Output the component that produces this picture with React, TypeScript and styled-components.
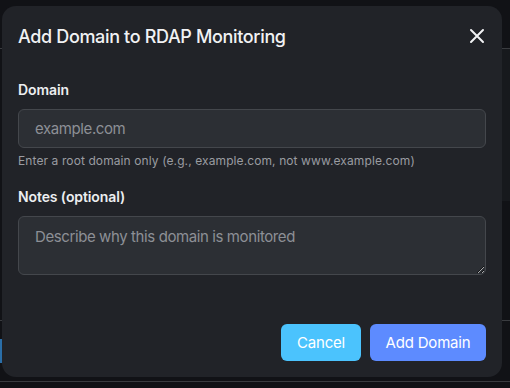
import React from "react";
import styled, { createGlobalStyle } from "styled-components";

const GlobalStyle = createGlobalStyle`
  html, body {
    margin: 0;
    padding: 0;
    background: #111216;
    font-family: Inter, "Noto Sans", sans-serif;
  }
  * { box-sizing: border-box; }
`;

const Backdrop = styled.div`
  position: relative;
  width: 510px;
  height: 388px;
  overflow: hidden;
  background: #111216;
`;

const Rule = styled.div<{ $top: number }>`
  position: absolute;
  left: 0;
  right: 0;
  top: ${({ $top }) => $top}px;
  height: 1px;
  background: #3a3c40;
`;

const SidePanel = styled.div`
  position: absolute;
  right: 0;
  top: 49px;
  width: 8px;
  height: 152px;
  background: #17191d;
`;

const BlueChip = styled.div`
  position: absolute;
  left: 0;
  top: 339px;
  width: 3px;
  height: 24px;
  background: #2a6ea8;
`;

const Modal = styled.div`
  position: absolute;
  left: 2px;
  top: 6px;
  width: 500px;
  height: 371px;
  background: #212328;
  border-radius: 14px;
  padding: 18px 16px 16px 16px;
  display: flex;
  flex-direction: column;
`;

const Header = styled.div`
  display: flex;
  align-items: center;
  justify-content: space-between;
  height: 24px;
`;

const Title = styled.h2`
  margin: 0;
  font-size: 18px;
  font-weight: 500;
  color: #f1f2f4;
  letter-spacing: -0.35px;
`;

const CloseButton = styled.button`
  background: none;
  border: none;
  padding: 0;
  width: 18px;
  height: 18px;
  cursor: pointer;
  display: flex;
`;

const Body = styled.div`
  display: flex;
  flex-direction: column;
  margin-top: 33px;
`;

const Label = styled.label`
  font-size: 14px;
  font-weight: 600;
  color: #eceef0;
  line-height: 18px;
  letter-spacing: -0.1px;
`;

const Field = styled.input`
  margin-top: 10px;
  height: 39px;
  width: 100%;
  background: #2c2f34;
  border: 1px solid #44474c;
  border-radius: 6px;
  padding: 0 16px;
  font-family: inherit;
  font-size: 15px;
  letter-spacing: -0.4px;
  color: #e6e7e9;
  outline: none;
  &::placeholder { color: #8d9096; }
`;

const Help = styled.div`
  margin-top: 5px;
  font-size: 12px;
  color: #9a9ca1;
  line-height: 16px;
  letter-spacing: 0.1px;
`;

const Area = styled.textarea`
  margin-top: 10px;
  height: 59px;
  width: 100%;
  background: #2c2f34;
  border: 1px solid #44474c;
  border-radius: 6px;
  padding: 10px 16px;
  font-family: inherit;
  font-size: 15px;
  letter-spacing: -0.4px;
  color: #e6e7e9;
  outline: none;
  resize: vertical;
  &::placeholder { color: #8d9096; }
`;

const Section = styled.div<{ $gap?: number }>`
  display: flex;
  flex-direction: column;
  margin-top: ${({ $gap }) => $gap ?? 0}px;
`;

const Footer = styled.div`
  margin-top: auto;
  display: flex;
  justify-content: flex-end;
  gap: 9px;
`;

const Button = styled.button<{ $tone: "cancel" | "primary" }>`
  height: 37px;
  padding: 0;
  border: none;
  border-radius: 6px;
  font-family: inherit;
  font-size: 15px;
  letter-spacing: -0.2px;
  color: #ffffff;
  background: ${({ $tone }) => ($tone === "cancel" ? "#4bc3fd" : "#5d8bff")};
  width: ${({ $tone }) => ($tone === "cancel" ? 80 : 116)}px;
  cursor: pointer;
`;

const CloseIcon = () => (
  <svg width="18" height="18" viewBox="0 0 18 18" fill="none">
    <path d="M3 3 L15 15 M15 3 L3 15" stroke="#f1f2f4" strokeWidth="2" strokeLinecap="round" />
  </svg>
);

const App: React.FC = () => (
  <>
    <GlobalStyle />
    <Backdrop>
      <Rule $top={48} />
      <Rule $top={320} />
      <Rule $top={381} />
      <SidePanel />
      <BlueChip />
      <Modal>
        <Header>
          <Title>Add Domain to RDAP Monitoring</Title>
          <CloseButton aria-label="Close">
            <CloseIcon />
          </CloseButton>
        </Header>
        <Body>
          <Section>
            <Label>Domain</Label>
            <Field placeholder="example.com" />
            <Help>Enter a root domain only (e.g., example.com, not www.example.com)</Help>
          </Section>
          <Section $gap={19}>
            <Label>Notes (optional)</Label>
            <Area placeholder="Describe why this domain is monitored" />
          </Section>
        </Body>
        <Footer>
          <Button $tone="cancel">Cancel</Button>
          <Button $tone="primary">Add Domain</Button>
        </Footer>
      </Modal>
    </Backdrop>
  </>
);

export default App;
